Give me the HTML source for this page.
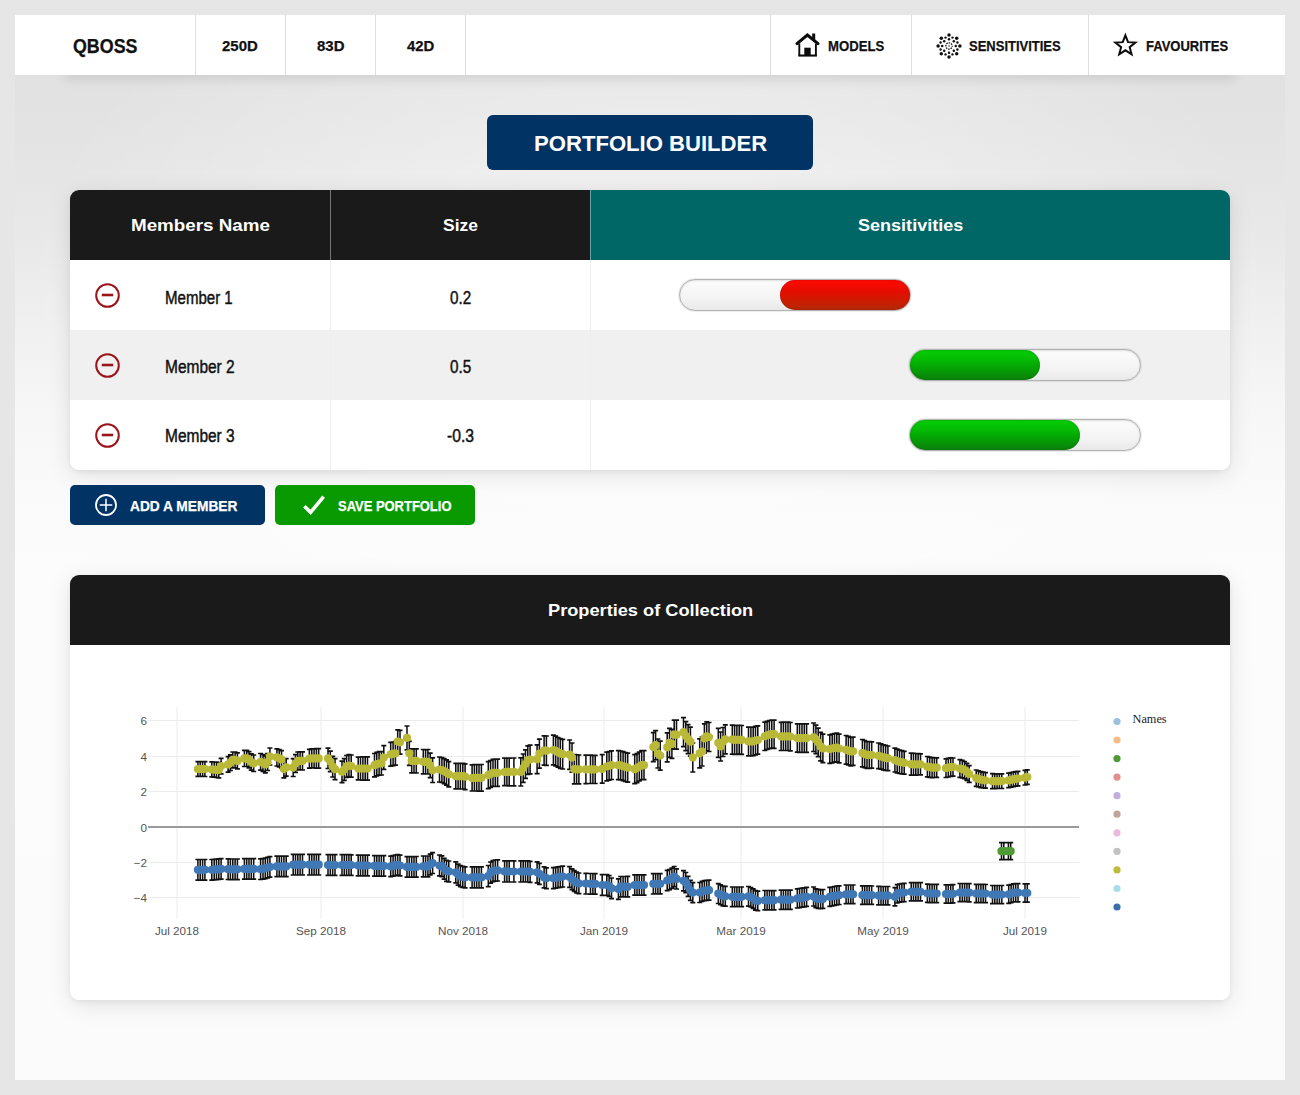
<!DOCTYPE html>
<html lang="en">
<head>
<meta charset="utf-8">
<title>QBOSS - Portfolio Builder</title>
<style>
*{box-sizing:border-box;margin:0;padding:0}
html,body{width:1300px;height:1095px;overflow:hidden}
body{background:#e6e6e6;font-family:"Liberation Sans",sans-serif;color:#111;position:relative}
.wrap{position:absolute;left:15px;top:15px;width:1270px;height:1065px;overflow:hidden;
 background:
  radial-gradient(ellipse 640px 420px at 50% 300px, rgba(255,255,255,.6), rgba(255,255,255,0) 100%),
  linear-gradient(180deg,#e1e1e1 60px,#e4e4e4 140px,#e9e9e9 230px,#f1f1f1 320px,#f7f7f7 400px,#fafafa 480px,#fcfcfc 560px,#fbfbfb 100%);}
.navsh{position:absolute;left:50px;top:30px;width:1170px;height:30px;box-shadow:0 4px 12px rgba(0,0,0,.10)}
.nav{position:absolute;left:0;top:0;width:1270px;height:60px;background:#fff;
}
.nav .it{position:absolute;top:0;height:60px;border-right:1px solid #dedede;display:flex;align-items:center;justify-content:center;
 font-weight:bold;font-size:14.5px;color:#111;white-space:nowrap}
.nav .it.r{border-right:0;border-left:1px solid #dedede}
.nav .logo{font-size:19px;}
.nav svg{display:block;margin-right:8px}
.title{position:absolute;left:472.3px;top:100px;width:325.4px;height:55px;background:#013365;border-radius:6px;color:#fff;
 display:flex;align-items:center;justify-content:center;}
.tbl{position:absolute;left:55px;top:175px;width:1160px;height:280px;border-radius:9px;overflow:hidden;background:#fff;}
.shadow{position:absolute;border-radius:9px;box-shadow:0 5px 24px rgba(0,0,0,.10),0 2px 5px rgba(0,0,0,.06)}
.th{position:absolute;top:0;height:70px;background:#1a1a1a;color:#fff;display:flex;align-items:center;justify-content:center;
 font-weight:bold;font-size:16.5px}
.th.teal{background:#006666}
.row{position:absolute;left:0;width:1160px;height:70px;background:#fff}
.row.alt{background:#f0f0f0}
.row .c{position:absolute;top:0;height:70px;display:flex;align-items:center;justify-content:center;font-size:17px;color:#111}
.vl{position:absolute;top:70px;width:1px;height:210px;background:#eee}
.btn{position:absolute;top:470px;height:40px;border-radius:5px;color:#fff;font-weight:bold;font-size:14.5px;display:flex;align-items:center;white-space:nowrap}
.card{position:absolute;left:55px;top:560px;width:1160px;height:425px;border-radius:9px;overflow:hidden;background:#fff}
.card .hd{height:70px;background:#1a1a1a;color:#fff;display:flex;align-items:center;justify-content:center;font-weight:bold;font-size:16.5px}
.chart{display:block;position:absolute;left:0;top:70px}
.chart .tk{font-family:"Liberation Sans",sans-serif;font-size:11.7px;fill:#555}
.chart .lg{font-family:"Liberation Serif",serif;font-size:12.3px;fill:#222}
.bar{position:absolute;top:19px;width:232px;height:32px;border-radius:16px;border:1px solid #b2b2b2;
 background:linear-gradient(180deg,#fdfdfd 0%,#f4f4f4 60%,#e9e9e9 100%);box-shadow:inset 0 1px 2px rgba(0,0,0,.12),0 0 1.5px rgba(0,0,0,.35)}
.bar i{position:absolute;top:0;height:30px;border-radius:15px;display:block}
.bar i.red{right:0;width:130px;background:linear-gradient(180deg,#ff0a00 0%,#e80c00 35%,#cc1c00 70%,#b22a08 100%);box-shadow:inset 0 0 2px rgba(120,0,0,.5)}
.bar i.grn{left:0;background:linear-gradient(180deg,#06cf06 0%,#04b804 35%,#059a05 70%,#0b800b 100%);box-shadow:inset 0 0 2px rgba(0,80,0,.5)}
.ov{position:absolute;left:0;top:0;width:1300px;height:1095px}
.ov svg{position:absolute;display:block;overflow:visible}
.t{position:absolute;white-space:nowrap;transform-origin:0 0;font-family:"Liberation Sans",sans-serif}
</style>
</head>
<body>
<div class="wrap">
 <div class="navsh"></div>
 <div class="nav">
  <div class="it" style="left:0;width:181px"></div>
  <div class="it" style="left:181px;width:90px"></div>
  <div class="it" style="left:271px;width:90px"></div>
  <div class="it" style="left:361px;width:90px"></div>
  <div class="it r" style="left:755px;width:141px"></div>
  <div class="it r" style="left:896px;width:177px"></div>
  <div class="it r" style="left:1073px;width:197px"></div>
 </div>
 <div class="title"></div>
 <div class="shadow" style="left:55px;top:175px;width:1160px;height:280px"></div>
 <div class="tbl">
  <div class="th" style="left:0;width:260px"></div>
  <div class="th" style="left:260px;width:260px;border-left:1px solid #767676"></div>
  <div class="th teal" style="left:520px;width:640px;border-left:1px solid #66a3a3"></div>
  <div class="row" style="top:70px"><div class="bar" style="left:609px"><i class="red"></i></div></div>
  <div class="row alt" style="top:140px"><div class="bar" style="left:839px"><i class="grn" style="width:130px"></i></div></div>
  <div class="row" style="top:210px"><div class="bar" style="left:839px"><i class="grn" style="width:170px"></i></div></div>
  <div class="vl" style="left:260px"></div><div class="vl" style="left:520px"></div>
 </div>
 <div class="btn" style="left:55px;width:195px;background:#013365"></div>
 <div class="btn" style="left:260px;width:200px;background:#089a00"></div>
 <div class="shadow" style="left:55px;top:560px;width:1160px;height:425px"></div>
 <div class="card">
  <div class="hd"></div>
  <svg class="chart" width="1160" height="355" viewBox="0 0 1160 355">
<path d="M107 62V274M251 62V274M393 62V274M534 62V274M671 62V274M813 62V274M955 62V274M78 75.5H1009M78 111.5H1009M78 146.5H1009M78 217.5H1009M78 252.5H1009" stroke="#ececec" stroke-width="1" fill="none"/>
<path d="M78 182H1009" stroke="#9a9a9a" stroke-width="2.2" fill="none"/>
<path d="M127.9 214.5V235.1M130.2 214.5V235.1M132.6 214.5V235.1M134.9 214.5V235.1M141.8 214.5V235.1M144.2 214.3V234.9M146.5 214.1V234.7M148.8 213.8V234.4M151.1 213.6V234.2M158.1 213.9V234.5M160.4 214V234.6M162.8 214V234.6M165.1 214V234.6M167.4 214V234.6M174.4 213.6V234.2M176.7 213.6V234.2M179 213.6V234.2M181.3 213.6V234.2M183.7 213.6V234.2M190.6 213.9V234.5M193 213.6V234.2M195.3 213V233.6M197.6 212.3V232.9M199.9 211.6V232.2M206.9 211.1V231.7M209.2 211.1V231.7M211.5 211.1V231.7M213.9 211.1V231.7M216.2 211.1V231.7M223.2 209.4V230M225.5 209.4V230M227.8 209.4V230M230.1 209.4V230M232.5 209.4V230M239.4 209.4V230M241.8 209.4V230M244.1 209.4V230M246.4 209.4V230M248.7 209.4V230M258 209.7V230.3M260.3 209.7V230.3M262.7 209.7V230.3M265 209.7V230.3M272 209.7V230.3M274.3 209.7V230.3M276.6 209.7V230.3M278.9 209.7V230.3M281.2 209.8V230.4M288.2 210.2V230.8M290.5 210.2V230.8M292.9 210.2V230.8M295.2 210.2V230.8M297.5 210.2V230.8M304.5 210.6V231.2M306.8 210.6V231.2M309.1 210.6V231.2M311.4 210.6V231.2M313.8 210.6V231.2M320.7 211.1V231.7M323.1 210.6V231.2M325.4 210V230.6M327.7 209.5V230.1M330 210.2V230.8M337 211.6V232.2M339.3 211.6V232.2M341.7 211.6V232.2M344 211.6V232.2M346.3 211.5V232.2M353.3 211V231.8M355.6 211V231.8M357.9 211V231.8M360.2 209.1V229.9M362.6 207.7V228.5M369.5 210V230.9M371.9 210.8V231.7M374.2 213.3V234.2M376.5 215.4V236.3M378.8 216V236.8M385.8 216.8V237.8M388.1 219.1V240.1M390.4 220.6V241.6M392.8 221.4V242.4M395.1 221.9V242.9M402.1 221.9V242.9M404.4 221.9V242.9M406.7 221.9V242.9M409 221.8V242.9M411.4 221.8V242.9M418.3 220.5V241.6M420.6 217V238.1M423 215.5V236.7M425.3 215V236.1M427.6 214.8V236M434.6 215.8V237M436.9 215.9V237M439.2 215.9V237M443.9 215.9V237M450.8 215.9V237M453.2 215.9V237M455.5 215.9V237M457.8 215.9V237M460.1 216.3V237.4M467.1 216.8V237.8M469.4 218.3V239.3M474.1 221.9V242.8M476.4 222.8V243.7M483.4 222.7V243.6M485.7 222.3V243.2M488 221.9V242.7M490.3 221.5V242.3M492.7 221.1V242M499.6 221.6V242.3M502 223.9V244.7M504.3 225.7V246.4M506.6 227.2V248M508.9 228V248.7M515.9 228.3V249M520.5 228.5V249.1M522.9 228.5V249.1M525.2 228.6V249.2M532.2 229.7V250.3M536.8 229.7V250.3M539.1 230.7V251.3M541.5 233V253.6M548.4 233.8V254.3M550.7 231.5V251.9M553.1 231.5V251.9M555.4 231.5V251.9M557.7 231.4V251.9M564.7 229.8V250.2M567 229.8V250.2M569.3 229.8V250.2M571.7 229.8V250.2M574 229.8V250.2M583.3 228.7V249M585.6 228.7V248.9M587.9 228.7V248.9M590.2 228.7V248.9M597.2 225.4V245.6M599.5 224.5V244.7M601.9 223.2V243.3M604.2 221.5V241.6M606.5 223.8V244M613.5 225.7V245.8M615.8 227.5V247.6M618.1 231.3V251.3M620.4 235.3V255.3M622.8 237.6V257.6M629.7 237.5V257.5M632.1 236.4V256.3M634.4 235.7V255.7M636.7 235.3V255.3M639 235.2V255.2M648.3 238.6V258.5M650.6 239.8V259.6M653 241V260.8M655.3 241.4V261.1M662.3 242V261.7M664.6 242V261.7M666.9 242V261.7M669.2 242V261.7M671.6 242V261.7M678.5 241.5V261.1M680.9 242.5V262M683.2 243.9V263.4M685.5 245.7V265.2M687.8 246.2V265.6M694.8 245.5V264.9M697.1 245.5V264.9M699.4 245.5V264.9M701.8 245.6V264.9M704.1 245.6V264.9M711.1 245.1V264.4M713.4 245.1V264.3M715.7 245.1V264.3M718 245.1V264.3M720.3 245.1V264.3M727.3 243.9V263M729.6 243.5V262.6M732 243.1V262.2M734.3 242.8V261.8M736.6 242.4V261.4M743.6 242V261M745.9 243.8V262.7M748.2 244.4V263.3M750.6 244.8V263.7M752.9 244.5V263.4M759.8 242.4V261.3M762.2 242V260.8M764.5 241.5V260.3M766.8 241.1V259.8M769.1 240.8V259.5M776.1 240V258.7M778.4 240V258.6M780.8 240V258.6M783.1 240V258.6M792.4 240.8V259.4M794.7 240.9V259.4M797 240.9V259.4M799.3 240.9V259.4M801.7 241V259.4M808.6 241.4V259.8M811 241.5V259.8M813.3 241.5V259.8M815.6 241.5V259.8M817.9 241.5V259.8M824.9 242.6V260.9M827.2 239.7V258M829.5 239V257.2M831.9 238.6V256.8M834.2 238.4V256.6M841.2 237.7V255.9M843.5 237.7V255.9M845.8 237.7V255.9M848.1 237.7V255.9M850.5 237.7V255.9M857.4 239.2V257.4M859.7 239.4V257.6M862.1 239.4V257.6M864.4 239.4V257.6M866.7 239.4V257.6M876 239.9V258.1M878.3 239.9V258.1M880.7 239.9V258.1M883 239.7V257.9M889.9 238.5V256.7M892.3 238.5V256.7M894.6 238.5V256.7M896.9 238.5V256.7M899.2 238.6V256.8M906.2 239.4V257.6M908.5 239.4V257.6M910.9 239.4V257.6M913.2 239.4V257.6M915.5 239.5V257.7M922.5 240.5V258.7M924.8 240.5V258.7M927.1 240.5V258.7M929.4 240.5V258.7M931.8 240.5V258.7M938.7 240.2V258.4M941.1 239.5V257.7M943.4 238.8V257M945.7 238.6V256.8M948 238.6V256.8M955 238.9V257.1M957.3 238.9V257.1" fill="none" stroke="#111" stroke-width="1.55"/>
<path d="M125.4 214.5h5M125.4 235.1h5M127.7 214.5h5M127.7 235.1h5M130.1 214.5h5M130.1 235.1h5M132.4 214.5h5M132.4 235.1h5M139.3 214.5h5M139.3 235.1h5M141.7 214.3h5M141.7 234.9h5M144 214.1h5M144 234.7h5M146.3 213.8h5M146.3 234.4h5M148.6 213.6h5M148.6 234.2h5M155.6 213.9h5M155.6 234.5h5M157.9 214h5M157.9 234.6h5M160.3 214h5M160.3 234.6h5M162.6 214h5M162.6 234.6h5M164.9 214h5M164.9 234.6h5M171.9 213.6h5M171.9 234.2h5M174.2 213.6h5M174.2 234.2h5M176.5 213.6h5M176.5 234.2h5M178.8 213.6h5M178.8 234.2h5M181.2 213.6h5M181.2 234.2h5M188.1 213.9h5M188.1 234.5h5M190.5 213.6h5M190.5 234.2h5M192.8 213h5M192.8 233.6h5M195.1 212.3h5M195.1 232.9h5M197.4 211.6h5M197.4 232.2h5M204.4 211.1h5M204.4 231.7h5M206.7 211.1h5M206.7 231.7h5M209 211.1h5M209 231.7h5M211.4 211.1h5M211.4 231.7h5M213.7 211.1h5M213.7 231.7h5M220.7 209.4h5M220.7 230h5M223 209.4h5M223 230h5M225.3 209.4h5M225.3 230h5M227.6 209.4h5M227.6 230h5M230 209.4h5M230 230h5M236.9 209.4h5M236.9 230h5M239.3 209.4h5M239.3 230h5M241.6 209.4h5M241.6 230h5M243.9 209.4h5M243.9 230h5M246.2 209.4h5M246.2 230h5M255.5 209.7h5M255.5 230.3h5M257.8 209.7h5M257.8 230.3h5M260.2 209.7h5M260.2 230.3h5M262.5 209.7h5M262.5 230.3h5M269.5 209.7h5M269.5 230.3h5M271.8 209.7h5M271.8 230.3h5M274.1 209.7h5M274.1 230.3h5M276.4 209.7h5M276.4 230.3h5M278.7 209.8h5M278.7 230.4h5M285.7 210.2h5M285.7 230.8h5M288 210.2h5M288 230.8h5M290.4 210.2h5M290.4 230.8h5M292.7 210.2h5M292.7 230.8h5M295 210.2h5M295 230.8h5M302 210.6h5M302 231.2h5M304.3 210.6h5M304.3 231.2h5M306.6 210.6h5M306.6 231.2h5M308.9 210.6h5M308.9 231.2h5M311.3 210.6h5M311.3 231.2h5M318.2 211.1h5M318.2 231.7h5M320.6 210.6h5M320.6 231.2h5M322.9 210h5M322.9 230.6h5M325.2 209.5h5M325.2 230.1h5M327.5 210.2h5M327.5 230.8h5M334.5 211.6h5M334.5 232.2h5M336.8 211.6h5M336.8 232.2h5M339.2 211.6h5M339.2 232.2h5M341.5 211.6h5M341.5 232.2h5M343.8 211.5h5M343.8 232.2h5M350.8 211h5M350.8 231.8h5M353.1 211h5M353.1 231.8h5M355.4 211h5M355.4 231.8h5M357.7 209.1h5M357.7 229.9h5M360.1 207.7h5M360.1 228.5h5M367 210h5M367 230.9h5M369.4 210.8h5M369.4 231.7h5M371.7 213.3h5M371.7 234.2h5M374 215.4h5M374 236.3h5M376.3 216h5M376.3 236.8h5M383.3 216.8h5M383.3 237.8h5M385.6 219.1h5M385.6 240.1h5M387.9 220.6h5M387.9 241.6h5M390.3 221.4h5M390.3 242.4h5M392.6 221.9h5M392.6 242.9h5M399.6 221.9h5M399.6 242.9h5M401.9 221.9h5M401.9 242.9h5M404.2 221.9h5M404.2 242.9h5M406.5 221.8h5M406.5 242.9h5M408.9 221.8h5M408.9 242.9h5M415.8 220.5h5M415.8 241.6h5M418.1 217h5M418.1 238.1h5M420.5 215.5h5M420.5 236.7h5M422.8 215h5M422.8 236.1h5M425.1 214.8h5M425.1 236h5M432.1 215.8h5M432.1 237h5M434.4 215.9h5M434.4 237h5M436.7 215.9h5M436.7 237h5M441.4 215.9h5M441.4 237h5M448.3 215.9h5M448.3 237h5M450.7 215.9h5M450.7 237h5M453 215.9h5M453 237h5M455.3 215.9h5M455.3 237h5M457.6 216.3h5M457.6 237.4h5M464.6 216.8h5M464.6 237.8h5M466.9 218.3h5M466.9 239.3h5M471.6 221.9h5M471.6 242.8h5M473.9 222.8h5M473.9 243.7h5M480.9 222.7h5M480.9 243.6h5M483.2 222.3h5M483.2 243.2h5M485.5 221.9h5M485.5 242.7h5M487.8 221.5h5M487.8 242.3h5M490.2 221.1h5M490.2 242h5M497.1 221.6h5M497.1 242.3h5M499.5 223.9h5M499.5 244.7h5M501.8 225.7h5M501.8 246.4h5M504.1 227.2h5M504.1 248h5M506.4 228h5M506.4 248.7h5M513.4 228.3h5M513.4 249h5M518 228.5h5M518 249.1h5M520.4 228.5h5M520.4 249.1h5M522.7 228.6h5M522.7 249.2h5M529.7 229.7h5M529.7 250.3h5M534.3 229.7h5M534.3 250.3h5M536.6 230.7h5M536.6 251.3h5M539 233h5M539 253.6h5M545.9 233.8h5M545.9 254.3h5M548.2 231.5h5M548.2 251.9h5M550.6 231.5h5M550.6 251.9h5M552.9 231.5h5M552.9 251.9h5M555.2 231.4h5M555.2 251.9h5M562.2 229.8h5M562.2 250.2h5M564.5 229.8h5M564.5 250.2h5M566.8 229.8h5M566.8 250.2h5M569.2 229.8h5M569.2 250.2h5M571.5 229.8h5M571.5 250.2h5M580.8 228.7h5M580.8 249h5M583.1 228.7h5M583.1 248.9h5M585.4 228.7h5M585.4 248.9h5M587.7 228.7h5M587.7 248.9h5M594.7 225.4h5M594.7 245.6h5M597 224.5h5M597 244.7h5M599.4 223.2h5M599.4 243.3h5M601.7 221.5h5M601.7 241.6h5M604 223.8h5M604 244h5M611 225.7h5M611 245.8h5M613.3 227.5h5M613.3 247.6h5M615.6 231.3h5M615.6 251.3h5M617.9 235.3h5M617.9 255.3h5M620.3 237.6h5M620.3 257.6h5M627.2 237.5h5M627.2 257.5h5M629.6 236.4h5M629.6 256.3h5M631.9 235.7h5M631.9 255.7h5M634.2 235.3h5M634.2 255.3h5M636.5 235.2h5M636.5 255.2h5M645.8 238.6h5M645.8 258.5h5M648.1 239.8h5M648.1 259.6h5M650.5 241h5M650.5 260.8h5M652.8 241.4h5M652.8 261.1h5M659.8 242h5M659.8 261.7h5M662.1 242h5M662.1 261.7h5M664.4 242h5M664.4 261.7h5M666.7 242h5M666.7 261.7h5M669.1 242h5M669.1 261.7h5M676 241.5h5M676 261.1h5M678.4 242.5h5M678.4 262h5M680.7 243.9h5M680.7 263.4h5M683 245.7h5M683 265.2h5M685.3 246.2h5M685.3 265.6h5M692.3 245.5h5M692.3 264.9h5M694.6 245.5h5M694.6 264.9h5M696.9 245.5h5M696.9 264.9h5M699.3 245.6h5M699.3 264.9h5M701.6 245.6h5M701.6 264.9h5M708.6 245.1h5M708.6 264.4h5M710.9 245.1h5M710.9 264.3h5M713.2 245.1h5M713.2 264.3h5M715.5 245.1h5M715.5 264.3h5M717.8 245.1h5M717.8 264.3h5M724.8 243.9h5M724.8 263h5M727.1 243.5h5M727.1 262.6h5M729.5 243.1h5M729.5 262.2h5M731.8 242.8h5M731.8 261.8h5M734.1 242.4h5M734.1 261.4h5M741.1 242h5M741.1 261h5M743.4 243.8h5M743.4 262.7h5M745.7 244.4h5M745.7 263.3h5M748.1 244.8h5M748.1 263.7h5M750.4 244.5h5M750.4 263.4h5M757.3 242.4h5M757.3 261.3h5M759.7 242h5M759.7 260.8h5M762 241.5h5M762 260.3h5M764.3 241.1h5M764.3 259.8h5M766.6 240.8h5M766.6 259.5h5M773.6 240h5M773.6 258.7h5M775.9 240h5M775.9 258.6h5M778.3 240h5M778.3 258.6h5M780.6 240h5M780.6 258.6h5M789.9 240.8h5M789.9 259.4h5M792.2 240.9h5M792.2 259.4h5M794.5 240.9h5M794.5 259.4h5M796.8 240.9h5M796.8 259.4h5M799.2 241h5M799.2 259.4h5M806.1 241.4h5M806.1 259.8h5M808.5 241.5h5M808.5 259.8h5M810.8 241.5h5M810.8 259.8h5M813.1 241.5h5M813.1 259.8h5M815.4 241.5h5M815.4 259.8h5M822.4 242.6h5M822.4 260.9h5M824.7 239.7h5M824.7 258h5M827 239h5M827 257.2h5M829.4 238.6h5M829.4 256.8h5M831.7 238.4h5M831.7 256.6h5M838.7 237.7h5M838.7 255.9h5M841 237.7h5M841 255.9h5M843.3 237.7h5M843.3 255.9h5M845.6 237.7h5M845.6 255.9h5M848 237.7h5M848 255.9h5M854.9 239.2h5M854.9 257.4h5M857.2 239.4h5M857.2 257.6h5M859.6 239.4h5M859.6 257.6h5M861.9 239.4h5M861.9 257.6h5M864.2 239.4h5M864.2 257.6h5M873.5 239.9h5M873.5 258.1h5M875.8 239.9h5M875.8 258.1h5M878.2 239.9h5M878.2 258.1h5M880.5 239.7h5M880.5 257.9h5M887.4 238.5h5M887.4 256.7h5M889.8 238.5h5M889.8 256.7h5M892.1 238.5h5M892.1 256.7h5M894.4 238.5h5M894.4 256.7h5M896.7 238.6h5M896.7 256.8h5M903.7 239.4h5M903.7 257.6h5M906 239.4h5M906 257.6h5M908.4 239.4h5M908.4 257.6h5M910.7 239.4h5M910.7 257.6h5M913 239.5h5M913 257.7h5M920 240.5h5M920 258.7h5M922.3 240.5h5M922.3 258.7h5M924.6 240.5h5M924.6 258.7h5M926.9 240.5h5M926.9 258.7h5M929.3 240.5h5M929.3 258.7h5M936.2 240.2h5M936.2 258.4h5M938.6 239.5h5M938.6 257.7h5M940.9 238.8h5M940.9 257h5M943.2 238.6h5M943.2 256.8h5M945.5 238.6h5M945.5 256.8h5M952.5 238.9h5M952.5 257.1h5M954.8 238.9h5M954.8 257.1h5" fill="none" stroke="#111" stroke-width="1.7"/>
<path d="M127.9 224.8h0M130.2 224.8h0M132.6 224.8h0M134.9 224.8h0M141.8 224.8h0M144.2 224.6h0M146.5 224.4h0M148.8 224.1h0M151.1 223.9h0M158.1 224.2h0M160.4 224.3h0M162.8 224.3h0M165.1 224.3h0M167.4 224.3h0M174.4 223.9h0M176.7 223.9h0M179 223.9h0M181.3 223.9h0M183.7 223.9h0M190.6 224.2h0M193 223.9h0M195.3 223.3h0M197.6 222.6h0M199.9 221.9h0M206.9 221.4h0M209.2 221.4h0M211.5 221.4h0M213.9 221.4h0M216.2 221.4h0M223.2 219.7h0M225.5 219.7h0M227.8 219.7h0M230.1 219.7h0M232.5 219.7h0M239.4 219.7h0M241.8 219.7h0M244.1 219.7h0M246.4 219.7h0M248.7 219.7h0M258 220h0M260.3 220h0M262.7 220h0M265 220h0M272 220h0M274.3 220h0M276.6 220h0M278.9 220h0M281.2 220.1h0M288.2 220.5h0M290.5 220.5h0M292.9 220.5h0M295.2 220.5h0M297.5 220.5h0M304.5 220.9h0M306.8 220.9h0M309.1 220.9h0M311.4 220.9h0M313.8 220.9h0M320.7 221.4h0M323.1 220.9h0M325.4 220.3h0M327.7 219.8h0M330 220.5h0M337 221.9h0M339.3 221.9h0M341.7 221.9h0M344 221.9h0M346.3 221.9h0M353.3 221.4h0M355.6 221.4h0M357.9 221.4h0M360.2 219.5h0M362.6 218.1h0M369.5 220.5h0M371.9 221.2h0M374.2 223.7h0M376.5 225.8h0M378.8 226.4h0M385.8 227.3h0M388.1 229.6h0M390.4 231.1h0M392.8 231.9h0M395.1 232.4h0M402.1 232.4h0M404.4 232.4h0M406.7 232.4h0M409 232.4h0M411.4 232.4h0M418.3 231.1h0M420.6 227.6h0M423 226.1h0M425.3 225.6h0M427.6 225.4h0M434.6 226.4h0M436.9 226.5h0M439.2 226.5h0M443.9 226.5h0M450.8 226.5h0M453.2 226.5h0M455.5 226.5h0M457.8 226.5h0M460.1 226.8h0M467.1 227.3h0M469.4 228.8h0M474.1 232.4h0M476.4 233.2h0M483.4 233.2h0M485.7 232.7h0M488 232.3h0M490.3 231.9h0M492.7 231.5h0M499.6 231.9h0M502 234.3h0M504.3 236h0M506.6 237.6h0M508.9 238.4h0M515.9 238.6h0M520.5 238.8h0M522.9 238.8h0M525.2 238.9h0M532.2 240h0M536.8 240h0M539.1 241h0M541.5 243.3h0M548.4 244.1h0M550.7 241.7h0M553.1 241.7h0M555.4 241.7h0M557.7 241.7h0M564.7 240h0M567 240h0M569.3 240h0M571.7 240h0M574 240h0M583.3 238.8h0M585.6 238.8h0M587.9 238.8h0M590.2 238.8h0M597.2 235.5h0M599.5 234.6h0M601.9 233.3h0M604.2 231.6h0M606.5 233.9h0M613.5 235.8h0M615.8 237.5h0M618.1 241.3h0M620.4 245.3h0M622.8 247.6h0M629.7 247.5h0M632.1 246.4h0M634.4 245.7h0M636.7 245.3h0M639 245.2h0M648.3 248.5h0M650.6 249.7h0M653 250.9h0M655.3 251.3h0M662.3 251.8h0M664.6 251.8h0M666.9 251.8h0M669.2 251.8h0M671.6 251.8h0M678.5 251.3h0M680.9 252.2h0M683.2 253.6h0M685.5 255.5h0M687.8 255.9h0M694.8 255.2h0M697.1 255.2h0M699.4 255.2h0M701.8 255.2h0M704.1 255.2h0M711.1 254.7h0M713.4 254.7h0M715.7 254.7h0M718 254.7h0M720.3 254.7h0M727.3 253.5h0M729.6 253.1h0M732 252.7h0M734.3 252.3h0M736.6 251.9h0M743.6 251.5h0M745.9 253.2h0M748.2 253.9h0M750.6 254.2h0M752.9 253.9h0M759.8 251.8h0M762.2 251.4h0M764.5 250.9h0M766.8 250.5h0M769.1 250.2h0M776.1 249.4h0M778.4 249.3h0M780.8 249.3h0M783.1 249.3h0M792.4 250.1h0M794.7 250.2h0M797 250.2h0M799.3 250.2h0M801.7 250.2h0M808.6 250.6h0M811 250.7h0M813.3 250.7h0M815.6 250.7h0M817.9 250.7h0M824.9 251.8h0M827.2 248.9h0M829.5 248.1h0M831.9 247.7h0M834.2 247.5h0M841.2 246.8h0M843.5 246.8h0M845.8 246.8h0M848.1 246.8h0M850.5 246.8h0M857.4 248.3h0M859.7 248.5h0M862.1 248.5h0M864.4 248.5h0M866.7 248.5h0M876 249h0M878.3 249h0M880.7 249h0M883 248.8h0M889.9 247.6h0M892.3 247.6h0M894.6 247.6h0M896.9 247.6h0M899.2 247.7h0M906.2 248.5h0M908.5 248.5h0M910.9 248.5h0M913.2 248.5h0M915.5 248.6h0M922.5 249.6h0M924.8 249.6h0M927.1 249.6h0M929.4 249.6h0M931.8 249.6h0M938.7 249.3h0M941.1 248.6h0M943.4 247.9h0M945.7 247.7h0M948 247.7h0M955 248h0M957.3 248h0" fill="none" stroke="#3f78b4" stroke-width="8.2" stroke-linecap="round"/>

<path d="M127.9 116.7V131.4M130.2 116.7V131.4M132.6 116.7V131.4M134.9 116.6V131.5M141.8 116.8V131.9M144.2 117V132.2M146.5 117.2V132.5M148.8 117.5V132.8M151.1 113.4V128.8M158.1 111.6V127.2M160.4 109.8V125.5M162.8 107V122.8M165.1 107V122.9M167.4 107.9V123.8M174.4 105.3V121.5M176.7 105.3V121.5M179 106.6V122.9M181.3 108.8V125.2M183.7 110V126.5M190.6 108.5V125.2M193 109.5V126.3M195.3 111V127.9M197.6 108.6V125.5M199.9 103V120M206.9 103.8V121M209.2 104.6V122M211.5 105.7V123M213.9 115.4V132.8M216.2 113.6V131.2M223.2 113.7V131.5M225.5 109.6V127.4M227.8 107V124.9M230.1 106.9V124.9M232.5 106.8V125M239.4 104.3V123.1M241.8 103.9V122.9M244.1 103.8V123M246.4 103.7V123.1M248.7 103.6V123.2M258 103.2V123.5M260.3 106.2V126.7M262.7 111.3V132M265 113.7V134.6M272 116.1V137.6M274.3 113.7V135.3M276.6 110.5V132.3M278.9 109.5V131.5M281.2 110V132.2M288.2 112.1V134.9M290.5 112V135M292.9 111.9V135.1M295.2 111.9V135.2M297.5 111.9V135.2M304.5 108.5V131.9M306.8 107.3V130.8M309.1 106.7V130.2M311.4 106.6V130M313.8 100.7V124.3M320.7 97.4V121.1M323.1 97V120.7M325.4 96.5V120.2M327.7 84.8V108.5M330 85.4V109.2M337 81V104.9M339.3 96.4V120.3M341.7 103.9V127.9M344 103.9V127.9M346.3 103.9V128M353.3 104.5V128.9M355.6 104.6V129M357.9 104.5V129M360.2 108.1V132.7M362.6 112.8V137.5M369.5 112V137M371.9 112.5V137.5M374.2 113.6V138.7M376.5 114.9V140.1M378.8 116.6V141.9M385.8 118.4V143.9M388.1 118.4V143.9M390.4 118.3V144M392.8 118.3V144M395.1 118.8V144.7M402.1 119.9V146M404.4 119.7V146M406.7 119.7V146M409 119.6V146.1M411.4 119.5V146.1M418.3 116.7V143.6M420.6 115.5V142.5M423 114.3V141.3M425.3 114.2V141.3M427.6 114.2V141.4M434.6 113.2V140.7M436.9 113.1V140.7M439.2 113.1V140.8M443.9 113V140.9M450.8 112.8V141M453.2 109V137.3M455.5 104.9V133.3M457.8 100.8V129.3M460.1 100.2V128.8M467.1 99.8V128.7M469.4 94.2V123.2M474.1 90.9V120.1M476.4 91V120.3M483.4 90.2V119.8M485.7 91.1V120.8M488 92.5V122.2M490.3 93.6V123.4M492.7 94.3V124M499.6 95V124.3M502 98V127.2M504.3 109.7V138.8M506.6 109.9V138.9M508.9 110V138.8M515.9 110.1V138.7M520.5 110.2V138.5M522.9 110.3V138.5M525.2 110.3V138.5M532.2 109.7V138.1M536.8 107.2V135.8M539.1 106.5V135.1M541.5 105.8V134.5M548.4 105.7V134.6M550.7 106V134.9M553.1 106.7V135.7M555.4 107.5V136.5M557.7 108.2V137.2M564.7 109.7V138.7M567 108.6V137.6M569.3 107V136M571.7 105.7V134.7M574 105.7V134.7M583.3 87.6V116.6M585.6 85.7V114.7M587.9 94V123M590.2 96.1V125.1M597.2 87.8V116.8M599.5 83.3V112.3M601.9 84.4V113.4M604.2 75.2V104.2M606.5 75.2V104.2M613.5 72.7V101.7M615.8 76.6V105.6M618.1 79.7V108.7M620.4 82.2V111.2M622.8 98V127M629.7 93.8V122.8M632.1 92V121M634.4 78.8V107.8M636.7 76.9V105.9M639 77.5V106.5M648.3 83.3V112.3M650.6 87V116M653 82.5V111.5M655.3 79.9V108.9M662.3 80.1V109.1M664.6 80.3V109.3M666.9 80.3V109.3M669.2 80.3V109.2M671.6 80.5V109.3M678.5 82.1V110.8M680.9 82.1V110.8M683.2 82.1V110.6M685.5 81.3V109.9M687.8 80.8V109.2M694.8 77.2V105.5M697.1 76.3V104.5M699.4 75.5V103.7M701.8 75V103.2M704.1 75.1V103.3M711.1 77.3V105.5M713.4 77.2V105.5M715.7 77.2V105.5M718 77.2V105.5M720.3 77.5V105.8M727.3 78.9V107.2M729.6 78.9V107.3M732 78.9V107.3M734.3 78.9V107.3M736.6 78.9V107.3M743.6 78V106.5M745.9 80.1V108.6M748.2 83.1V111.6M750.6 87.3V115.8M752.9 89.1V117.6M759.8 89.8V118.3M762.2 89.2V117.8M764.5 88.7V117.2M766.8 88.2V116.8M769.1 89.2V117.8M776.1 90.5V119.1M778.4 91.3V119.9M780.8 92.3V120.8M783.1 92.1V120.4M792.4 94.5V121.8M794.7 95.5V122.6M797 96.6V123.4M799.3 96.7V123.3M801.7 96.9V123.2M808.6 98V123.6M811 98.9V124.2M813.3 99.8V124.8M815.6 100.4V125.3M817.9 101V125.6M824.9 103.1V127M827.2 104.2V127.8M829.5 105.2V128.5M831.9 105.7V128.8M834.2 106.3V129.2M841.2 108.1V130.2M843.5 108.4V130.2M845.8 108.5V130.1M848.1 108.6V130M850.5 108.8V129.9M857.4 111.5V131.8M859.7 112.1V132.3M862.1 112.7V132.6M864.4 112.8V132.5M866.7 112.9V132.4M876 113.8V132.5M878.3 113.4V132M880.7 112.9V131.3M883 113V131.2M889.9 114.7V132.3M892.3 115.4V132.8M894.6 116.5V133.7M896.9 118.4V135.4M899.2 120.6V137.4M906.2 125V141.3M908.5 125.8V141.9M910.9 126.7V142.6M913.2 127.2V142.9M915.5 127.7V143.2M922.5 128.7V143.6M924.8 128.8V143.6M927.1 128.9V143.5M929.4 128.9V143.5M931.8 128.9V143.5M938.7 128.1V142.7M941.1 127.6V142.2M943.4 127.1V141.7M945.7 126.6V141.2M948 126.3V140.9M955 125.4V140M957.3 124.8V139.4" fill="none" stroke="#111" stroke-width="1.55"/>
<path d="M125.4 116.7h5M125.4 131.4h5M127.7 116.7h5M127.7 131.4h5M130.1 116.7h5M130.1 131.4h5M132.4 116.6h5M132.4 131.5h5M139.3 116.8h5M139.3 131.9h5M141.7 117h5M141.7 132.2h5M144 117.2h5M144 132.5h5M146.3 117.5h5M146.3 132.8h5M148.6 113.4h5M148.6 128.8h5M155.6 111.6h5M155.6 127.2h5M157.9 109.8h5M157.9 125.5h5M160.3 107h5M160.3 122.8h5M162.6 107h5M162.6 122.9h5M164.9 107.9h5M164.9 123.8h5M171.9 105.3h5M171.9 121.5h5M174.2 105.3h5M174.2 121.5h5M176.5 106.6h5M176.5 122.9h5M178.8 108.8h5M178.8 125.2h5M181.2 110h5M181.2 126.5h5M188.1 108.5h5M188.1 125.2h5M190.5 109.5h5M190.5 126.3h5M192.8 111h5M192.8 127.9h5M195.1 108.6h5M195.1 125.5h5M197.4 103h5M197.4 120h5M204.4 103.8h5M204.4 121h5M206.7 104.6h5M206.7 122h5M209 105.7h5M209 123h5M211.4 115.4h5M211.4 132.8h5M213.7 113.6h5M213.7 131.2h5M220.7 113.7h5M220.7 131.5h5M223 109.6h5M223 127.4h5M225.3 107h5M225.3 124.9h5M227.6 106.9h5M227.6 124.9h5M230 106.8h5M230 125h5M236.9 104.3h5M236.9 123.1h5M239.3 103.9h5M239.3 122.9h5M241.6 103.8h5M241.6 123h5M243.9 103.7h5M243.9 123.1h5M246.2 103.6h5M246.2 123.2h5M255.5 103.2h5M255.5 123.5h5M257.8 106.2h5M257.8 126.7h5M260.2 111.3h5M260.2 132h5M262.5 113.7h5M262.5 134.6h5M269.5 116.1h5M269.5 137.6h5M271.8 113.7h5M271.8 135.3h5M274.1 110.5h5M274.1 132.3h5M276.4 109.5h5M276.4 131.5h5M278.7 110h5M278.7 132.2h5M285.7 112.1h5M285.7 134.9h5M288 112h5M288 135h5M290.4 111.9h5M290.4 135.1h5M292.7 111.9h5M292.7 135.2h5M295 111.9h5M295 135.2h5M302 108.5h5M302 131.9h5M304.3 107.3h5M304.3 130.8h5M306.6 106.7h5M306.6 130.2h5M308.9 106.6h5M308.9 130h5M311.3 100.7h5M311.3 124.3h5M318.2 97.4h5M318.2 121.1h5M320.6 97h5M320.6 120.7h5M322.9 96.5h5M322.9 120.2h5M325.2 84.8h5M325.2 108.5h5M327.5 85.4h5M327.5 109.2h5M334.5 81h5M334.5 104.9h5M336.8 96.4h5M336.8 120.3h5M339.2 103.9h5M339.2 127.9h5M341.5 103.9h5M341.5 127.9h5M343.8 103.9h5M343.8 128h5M350.8 104.5h5M350.8 128.9h5M353.1 104.6h5M353.1 129h5M355.4 104.5h5M355.4 129h5M357.7 108.1h5M357.7 132.7h5M360.1 112.8h5M360.1 137.5h5M367 112h5M367 137h5M369.4 112.5h5M369.4 137.5h5M371.7 113.6h5M371.7 138.7h5M374 114.9h5M374 140.1h5M376.3 116.6h5M376.3 141.9h5M383.3 118.4h5M383.3 143.9h5M385.6 118.4h5M385.6 143.9h5M387.9 118.3h5M387.9 144h5M390.3 118.3h5M390.3 144h5M392.6 118.8h5M392.6 144.7h5M399.6 119.9h5M399.6 146h5M401.9 119.7h5M401.9 146h5M404.2 119.7h5M404.2 146h5M406.5 119.6h5M406.5 146.1h5M408.9 119.5h5M408.9 146.1h5M415.8 116.7h5M415.8 143.6h5M418.1 115.5h5M418.1 142.5h5M420.5 114.3h5M420.5 141.3h5M422.8 114.2h5M422.8 141.3h5M425.1 114.2h5M425.1 141.4h5M432.1 113.2h5M432.1 140.7h5M434.4 113.1h5M434.4 140.7h5M436.7 113.1h5M436.7 140.8h5M441.4 113h5M441.4 140.9h5M448.3 112.8h5M448.3 141h5M450.7 109h5M450.7 137.3h5M453 104.9h5M453 133.3h5M455.3 100.8h5M455.3 129.3h5M457.6 100.2h5M457.6 128.8h5M464.6 99.8h5M464.6 128.7h5M466.9 94.2h5M466.9 123.2h5M471.6 90.9h5M471.6 120.1h5M473.9 91h5M473.9 120.3h5M480.9 90.2h5M480.9 119.8h5M483.2 91.1h5M483.2 120.8h5M485.5 92.5h5M485.5 122.2h5M487.8 93.6h5M487.8 123.4h5M490.2 94.3h5M490.2 124h5M497.1 95h5M497.1 124.3h5M499.5 98h5M499.5 127.2h5M501.8 109.7h5M501.8 138.8h5M504.1 109.9h5M504.1 138.9h5M506.4 110h5M506.4 138.8h5M513.4 110.1h5M513.4 138.7h5M518 110.2h5M518 138.5h5M520.4 110.3h5M520.4 138.5h5M522.7 110.3h5M522.7 138.5h5M529.7 109.7h5M529.7 138.1h5M534.3 107.2h5M534.3 135.8h5M536.6 106.5h5M536.6 135.1h5M539 105.8h5M539 134.5h5M545.9 105.7h5M545.9 134.6h5M548.2 106h5M548.2 134.9h5M550.6 106.7h5M550.6 135.7h5M552.9 107.5h5M552.9 136.5h5M555.2 108.2h5M555.2 137.2h5M562.2 109.7h5M562.2 138.7h5M564.5 108.6h5M564.5 137.6h5M566.8 107h5M566.8 136h5M569.2 105.7h5M569.2 134.7h5M571.5 105.7h5M571.5 134.7h5M580.8 87.6h5M580.8 116.6h5M583.1 85.7h5M583.1 114.7h5M585.4 94h5M585.4 123h5M587.7 96.1h5M587.7 125.1h5M594.7 87.8h5M594.7 116.8h5M597 83.3h5M597 112.3h5M599.4 84.4h5M599.4 113.4h5M601.7 75.2h5M601.7 104.2h5M604 75.2h5M604 104.2h5M611 72.7h5M611 101.7h5M613.3 76.6h5M613.3 105.6h5M615.6 79.7h5M615.6 108.7h5M617.9 82.2h5M617.9 111.2h5M620.3 98h5M620.3 127h5M627.2 93.8h5M627.2 122.8h5M629.6 92h5M629.6 121h5M631.9 78.8h5M631.9 107.8h5M634.2 76.9h5M634.2 105.9h5M636.5 77.5h5M636.5 106.5h5M645.8 83.3h5M645.8 112.3h5M648.1 87h5M648.1 116h5M650.5 82.5h5M650.5 111.5h5M652.8 79.9h5M652.8 108.9h5M659.8 80.1h5M659.8 109.1h5M662.1 80.3h5M662.1 109.3h5M664.4 80.3h5M664.4 109.3h5M666.7 80.3h5M666.7 109.2h5M669.1 80.5h5M669.1 109.3h5M676 82.1h5M676 110.8h5M678.4 82.1h5M678.4 110.8h5M680.7 82.1h5M680.7 110.6h5M683 81.3h5M683 109.9h5M685.3 80.8h5M685.3 109.2h5M692.3 77.2h5M692.3 105.5h5M694.6 76.3h5M694.6 104.5h5M696.9 75.5h5M696.9 103.7h5M699.3 75h5M699.3 103.2h5M701.6 75.1h5M701.6 103.3h5M708.6 77.3h5M708.6 105.5h5M710.9 77.2h5M710.9 105.5h5M713.2 77.2h5M713.2 105.5h5M715.5 77.2h5M715.5 105.5h5M717.8 77.5h5M717.8 105.8h5M724.8 78.9h5M724.8 107.2h5M727.1 78.9h5M727.1 107.3h5M729.5 78.9h5M729.5 107.3h5M731.8 78.9h5M731.8 107.3h5M734.1 78.9h5M734.1 107.3h5M741.1 78h5M741.1 106.5h5M743.4 80.1h5M743.4 108.6h5M745.7 83.1h5M745.7 111.6h5M748.1 87.3h5M748.1 115.8h5M750.4 89.1h5M750.4 117.6h5M757.3 89.8h5M757.3 118.3h5M759.7 89.2h5M759.7 117.8h5M762 88.7h5M762 117.2h5M764.3 88.2h5M764.3 116.8h5M766.6 89.2h5M766.6 117.8h5M773.6 90.5h5M773.6 119.1h5M775.9 91.3h5M775.9 119.9h5M778.3 92.3h5M778.3 120.8h5M780.6 92.1h5M780.6 120.4h5M789.9 94.5h5M789.9 121.8h5M792.2 95.5h5M792.2 122.6h5M794.5 96.6h5M794.5 123.4h5M796.8 96.7h5M796.8 123.3h5M799.2 96.9h5M799.2 123.2h5M806.1 98h5M806.1 123.6h5M808.5 98.9h5M808.5 124.2h5M810.8 99.8h5M810.8 124.8h5M813.1 100.4h5M813.1 125.3h5M815.4 101h5M815.4 125.6h5M822.4 103.1h5M822.4 127h5M824.7 104.2h5M824.7 127.8h5M827 105.2h5M827 128.5h5M829.4 105.7h5M829.4 128.8h5M831.7 106.3h5M831.7 129.2h5M838.7 108.1h5M838.7 130.2h5M841 108.4h5M841 130.2h5M843.3 108.5h5M843.3 130.1h5M845.6 108.6h5M845.6 130h5M848 108.8h5M848 129.9h5M854.9 111.5h5M854.9 131.8h5M857.2 112.1h5M857.2 132.3h5M859.6 112.7h5M859.6 132.6h5M861.9 112.8h5M861.9 132.5h5M864.2 112.9h5M864.2 132.4h5M873.5 113.8h5M873.5 132.5h5M875.8 113.4h5M875.8 132h5M878.2 112.9h5M878.2 131.3h5M880.5 113h5M880.5 131.2h5M887.4 114.7h5M887.4 132.3h5M889.8 115.4h5M889.8 132.8h5M892.1 116.5h5M892.1 133.7h5M894.4 118.4h5M894.4 135.4h5M896.7 120.6h5M896.7 137.4h5M903.7 125h5M903.7 141.3h5M906 125.8h5M906 141.9h5M908.4 126.7h5M908.4 142.6h5M910.7 127.2h5M910.7 142.9h5M913 127.7h5M913 143.2h5M920 128.7h5M920 143.6h5M922.3 128.8h5M922.3 143.6h5M924.6 128.9h5M924.6 143.5h5M926.9 128.9h5M926.9 143.5h5M929.3 128.9h5M929.3 143.5h5M936.2 128.1h5M936.2 142.7h5M938.6 127.6h5M938.6 142.2h5M940.9 127.1h5M940.9 141.7h5M943.2 126.6h5M943.2 141.2h5M945.5 126.3h5M945.5 140.9h5M952.5 125.4h5M952.5 140h5M954.8 124.8h5M954.8 139.4h5" fill="none" stroke="#111" stroke-width="1.7"/>
<path d="M127.9 124h0M130.2 124h0M132.6 124h0M134.9 124h0M141.8 124.4h0M144.2 124.6h0M146.5 124.9h0M148.8 125.1h0M151.1 121.1h0M158.1 119.4h0M160.4 117.7h0M162.8 114.9h0M165.1 114.9h0M167.4 115.9h0M174.4 113.4h0M176.7 113.4h0M179 114.7h0M181.3 117h0M183.7 118.3h0M190.6 116.9h0M193 117.9h0M195.3 119.5h0M197.6 117h0M199.9 111.5h0M206.9 112.4h0M209.2 113.3h0M211.5 114.4h0M213.9 124.1h0M216.2 122.4h0M223.2 122.6h0M225.5 118.5h0M227.8 115.9h0M230.1 115.9h0M232.5 115.9h0M239.4 113.7h0M241.8 113.4h0M244.1 113.4h0M246.4 113.4h0M248.7 113.4h0M258 113.4h0M260.3 116.5h0M262.7 121.6h0M265 124.2h0M272 126.8h0M274.3 124.5h0M276.6 121.4h0M278.9 120.5h0M281.2 121.1h0M288.2 123.5h0M290.5 123.5h0M292.9 123.5h0M295.2 123.5h0M297.5 123.5h0M304.5 120.2h0M306.8 119.1h0M309.1 118.5h0M311.4 118.3h0M313.8 112.5h0M320.7 109.3h0M323.1 108.8h0M325.4 108.4h0M327.7 96.6h0M330 97.3h0M337 92.9h0M339.3 108.3h0M341.7 115.9h0M344 115.9h0M346.3 115.9h0M353.3 116.7h0M355.6 116.8h0M357.9 116.8h0M360.2 120.4h0M362.6 125.2h0M369.5 124.5h0M371.9 125h0M374.2 126.2h0M376.5 127.5h0M378.8 129.3h0M385.8 131.1h0M388.1 131.2h0M390.4 131.2h0M392.8 131.2h0M395.1 131.7h0M402.1 133h0M404.4 132.8h0M406.7 132.8h0M409 132.8h0M411.4 132.8h0M418.3 130.1h0M420.6 129h0M423 127.8h0M425.3 127.8h0M427.6 127.8h0M434.6 127h0M436.9 126.9h0M439.2 126.9h0M443.9 126.9h0M450.8 126.9h0M453.2 123.1h0M455.5 119.1h0M457.8 115.1h0M460.1 114.5h0M467.1 114.2h0M469.4 108.7h0M474.1 105.5h0M476.4 105.7h0M483.4 105h0M485.7 105.9h0M488 107.3h0M490.3 108.5h0M492.7 109.2h0M499.6 109.7h0M502 112.6h0M504.3 124.2h0M506.6 124.4h0M508.9 124.4h0M515.9 124.4h0M520.5 124.4h0M522.9 124.4h0M525.2 124.4h0M532.2 123.9h0M536.8 121.5h0M539.1 120.8h0M541.5 120.2h0M548.4 120.2h0M550.7 120.4h0M553.1 121.2h0M555.4 122h0M557.7 122.7h0M564.7 124.2h0M567 123.1h0M569.3 121.5h0M571.7 120.2h0M574 120.2h0M583.3 102.1h0M585.6 100.2h0M587.9 108.5h0M590.2 110.6h0M597.2 102.3h0M599.5 97.8h0M601.9 98.9h0M604.2 89.7h0M606.5 89.7h0M613.5 87.2h0M615.8 91.1h0M618.1 94.2h0M620.4 96.7h0M622.8 112.5h0M629.7 108.3h0M632.1 106.5h0M634.4 93.3h0M636.7 91.4h0M639 92h0M648.3 97.8h0M650.6 101.5h0M653 97h0M655.3 94.4h0M662.3 94.6h0M664.6 94.8h0M666.9 94.8h0M669.2 94.8h0M671.6 94.9h0M678.5 96.4h0M680.9 96.5h0M683.2 96.4h0M685.5 95.6h0M687.8 95h0M694.8 91.3h0M697.1 90.4h0M699.4 89.6h0M701.8 89.1h0M704.1 89.2h0M711.1 91.4h0M713.4 91.4h0M715.7 91.4h0M718 91.4h0M720.3 91.6h0M727.3 93.1h0M729.6 93.1h0M732 93.1h0M734.3 93.1h0M736.6 93.1h0M743.6 92.3h0M745.9 94.4h0M748.2 97.3h0M750.6 101.6h0M752.9 103.4h0M759.8 104.1h0M762.2 103.5h0M764.5 103h0M766.8 102.5h0M769.1 103.5h0M776.1 104.8h0M778.4 105.6h0M780.8 106.5h0M783.1 106.3h0M792.4 108.1h0M794.7 109h0M797 110h0M799.3 110h0M801.7 110h0M808.6 110.8h0M811 111.5h0M813.3 112.3h0M815.6 112.9h0M817.9 113.3h0M824.9 115.1h0M827.2 116h0M829.5 116.8h0M831.9 117.3h0M834.2 117.8h0M841.2 119.2h0M843.5 119.3h0M845.8 119.3h0M848.1 119.3h0M850.5 119.3h0M857.4 121.7h0M859.7 122.2h0M862.1 122.7h0M864.4 122.7h0M866.7 122.7h0M876 123.2h0M878.3 122.7h0M880.7 122.1h0M883 122.1h0M889.9 123.5h0M892.3 124.1h0M894.6 125.1h0M896.9 126.9h0M899.2 129h0M906.2 133.1h0M908.5 133.9h0M910.9 134.6h0M913.2 135.1h0M915.5 135.5h0M922.5 136.2h0M924.8 136.2h0M927.1 136.2h0M929.4 136.2h0M931.8 136.2h0M938.7 135.4h0M941.1 134.9h0M943.4 134.4h0M945.7 133.9h0M948 133.6h0M955 132.7h0M957.3 132.1h0" fill="none" stroke="#b9b837" stroke-width="8.2" stroke-linecap="round"/>

<path d="M931.5 197.7V214.7M933.8 197.7V214.7M938.4 197.7V214.7M940.7 197.7V214.7" fill="none" stroke="#111" stroke-width="1.55"/>
<path d="M929 197.7h5M929 214.7h5M931.3 197.7h5M931.3 214.7h5M935.9 197.7h5M935.9 214.7h5M938.2 197.7h5M938.2 214.7h5" fill="none" stroke="#111" stroke-width="1.7"/>
<path d="M931.5 206.2h0M933.8 206.2h0M938.4 206.2h0M940.7 206.2h0" fill="none" stroke="#4f9a35" stroke-width="8.2" stroke-linecap="round"/>

<g class="tk" text-anchor="end">
<text x="77" y="79.5">6</text>
<text x="77" y="115.5">4</text>
<text x="77" y="150.5">2</text>
<text x="77" y="186.5">0</text>
<text x="77" y="221.5">−2</text>
<text x="77" y="256.5">−4</text>
</g><g class="tk" text-anchor="middle">
<text x="107" y="290">Jul 2018</text>
<text x="251" y="290">Sep 2018</text>
<text x="393" y="290">Nov 2018</text>
<text x="534" y="290">Jan 2019</text>
<text x="671" y="290">Mar 2019</text>
<text x="813" y="290">May 2019</text>
<text x="955" y="290">Jul 2019</text>
</g>
<circle cx="1047" cy="76.5" r="3.6" fill="#9dbfe0"/>
<circle cx="1047" cy="95" r="3.6" fill="#f5bd85"/>
<circle cx="1047" cy="113.6" r="3.6" fill="#4f9a35"/>
<circle cx="1047" cy="132.1" r="3.6" fill="#e08f8c"/>
<circle cx="1047" cy="150.7" r="3.6" fill="#c3addb"/>
<circle cx="1047" cy="169.2" r="3.6" fill="#bfa49c"/>
<circle cx="1047" cy="187.8" r="3.6" fill="#ebb8de"/>
<circle cx="1047" cy="206.4" r="3.6" fill="#c2c2c2"/>
<circle cx="1047" cy="224.9" r="3.6" fill="#bcbb3a"/>
<circle cx="1047" cy="243.5" r="3.6" fill="#a6dde6"/>
<circle cx="1047" cy="262" r="3.6" fill="#3a6fae"/>
<text class="lg" x="1062.5" y="78">Names</text>
</svg>
 </div>
</div>
<div class="ov">
<svg style="left:794px;top:32px" width="27" height="26" viewBox="794 32 27 26"><path d="M797 43.6 807.4 35 818 43.6" fill="none" stroke="#0c0c0c" stroke-width="3.1" stroke-linecap="round" stroke-linejoin="miter"/><path d="M812.2 33.6h3v7l-3-2.6z" fill="#0c0c0c"/><path d="M799.3 43.5V55.6M815.9 43.5V55.6" fill="none" stroke="#0c0c0c" stroke-width="1.9"/><path d="M798.3 55.55H816.9" stroke="#0c0c0c" stroke-width="2.1"/><rect x="804.3" y="47.7" width="6.4" height="7.6" fill="#0c0c0c"/></svg>
<svg style="left:935.9px;top:32.5px" width="26" height="26" viewBox="-13 -13 26 26"><g fill="#111"><circle cx="0.00" cy="-10.90" r="1.75"/><circle cx="7.71" cy="-7.71" r="1.75"/><circle cx="10.90" cy="-0.00" r="1.75"/><circle cx="7.71" cy="7.71" r="1.75"/><circle cx="0.00" cy="10.90" r="1.75"/><circle cx="-7.71" cy="7.71" r="1.75"/><circle cx="-10.90" cy="0.00" r="1.75"/><circle cx="-7.71" cy="-7.71" r="1.75"/><circle cx="3.48" cy="-8.41" r="1.20"/><circle cx="8.41" cy="-3.48" r="1.20"/><circle cx="8.41" cy="3.48" r="1.20"/><circle cx="3.48" cy="8.41" r="1.20"/><circle cx="-3.48" cy="8.41" r="1.20"/><circle cx="-8.41" cy="3.48" r="1.20"/><circle cx="-8.41" cy="-3.48" r="1.20"/><circle cx="-3.48" cy="-8.41" r="1.20"/><circle cx="0.00" cy="-6.80" r="1.25"/><circle cx="4.81" cy="-4.81" r="1.25"/><circle cx="6.80" cy="-0.00" r="1.25"/><circle cx="4.81" cy="4.81" r="1.25"/><circle cx="0.00" cy="6.80" r="1.25"/><circle cx="-4.81" cy="4.81" r="1.25"/><circle cx="-6.80" cy="0.00" r="1.25"/><circle cx="-4.81" cy="-4.81" r="1.25"/></g><circle r="3.2" fill="none" stroke="#111" stroke-width="1.25" stroke-dasharray="1.6 0.913" stroke-dashoffset="0.8"/><path d="M0 -1.1V0.9" stroke="#111" stroke-width=".8"/></svg>
<svg style="left:1112px;top:32px" width="27" height="26" viewBox="1112 32 27 26"><path d="M1125.40 35.30L1128.05 42.16L1135.39 42.56L1129.68 47.19L1131.57 54.29L1125.40 50.30L1119.23 54.29L1121.12 47.19L1115.41 42.56L1122.75 42.16Z" fill="none" stroke="#0c0c0c" stroke-width="2" stroke-linejoin="miter" stroke-miterlimit="6"/></svg>
<svg style="left:93px;top:281px" width="29" height="29" viewBox="-14.5 -14.5 29 29"><circle r="11.3" fill="none" stroke="#9a141a" stroke-width="2"/><path d="M-5.7 -.5h11.4" stroke="#9a141a" stroke-width="2.6"/></svg>
<svg style="left:93px;top:351px" width="29" height="29" viewBox="-14.5 -14.5 29 29"><circle r="11.3" fill="none" stroke="#9a141a" stroke-width="2"/><path d="M-5.7 -.5h11.4" stroke="#9a141a" stroke-width="2.6"/></svg>
<svg style="left:93px;top:421px" width="29" height="29" viewBox="-14.5 -14.5 29 29"><circle r="11.3" fill="none" stroke="#9a141a" stroke-width="2"/><path d="M-5.7 -.5h11.4" stroke="#9a141a" stroke-width="2.6"/></svg>
<svg style="left:94px;top:493px" width="24" height="24" viewBox="-12 -12 24 24"><circle r="10" fill="none" stroke="#fff" stroke-width="1.8"/><path d="M0 -6.3v12.6M-6.3 0h12.6" stroke="#fff" stroke-width="1.5" fill="none"/></svg>
<svg style="left:300px;top:492px" width="28" height="26" viewBox="300 492 28 26"><path d="M304.4 506.2 310.6 512.4 323.6 496.6" fill="none" stroke="#fff" stroke-width="3.6"/></svg>
<span class="t" style="left:73.1px;top:37.0px;font-size:19.7px;line-height:19.7px;color:#111;transform:scaleX(0.906);font-weight:bold;-webkit-text-stroke:.25px #111">QBOSS</span>
<span class="t" style="left:222.3px;top:37.7px;font-size:15.3px;line-height:15.3px;color:#111;transform:scaleX(0.978);font-weight:bold;-webkit-text-stroke:.25px #111">250D</span>
<span class="t" style="left:316.9px;top:37.7px;font-size:15.3px;line-height:15.3px;color:#111;transform:scaleX(0.979);font-weight:bold;-webkit-text-stroke:.25px #111">83D</span>
<span class="t" style="left:406.5px;top:37.7px;font-size:15.3px;line-height:15.3px;color:#111;transform:scaleX(0.975);font-weight:bold;-webkit-text-stroke:.25px #111">42D</span>
<span class="t" style="left:827.6px;top:39.4px;font-size:14.4px;line-height:14.4px;color:#111;transform:scaleX(0.913);font-weight:bold;-webkit-text-stroke:.25px #111">MODELS</span>
<span class="t" style="left:968.8px;top:39.4px;font-size:14.4px;line-height:14.4px;color:#111;transform:scaleX(0.903);font-weight:bold;-webkit-text-stroke:.25px #111">SENSITIVITIES</span>
<span class="t" style="left:1145.8px;top:39.4px;font-size:14.4px;line-height:14.4px;color:#111;transform:scaleX(0.904);font-weight:bold;-webkit-text-stroke:.25px #111">FAVOURITES</span>
<span class="t" style="left:533.9px;top:132.5px;font-size:22.2px;line-height:22.2px;color:#fff;transform:scaleX(0.996);font-weight:bold">PORTFOLIO BUILDER</span>
<span class="t" style="left:130.8px;top:217.4px;font-size:17.0px;line-height:17.0px;color:#fff;transform:scaleX(1.106);font-weight:bold">Members Name</span>
<span class="t" style="left:442.9px;top:217.4px;font-size:17.0px;line-height:17.0px;color:#fff;transform:scaleX(1.026);font-weight:bold">Size</span>
<span class="t" style="left:858.0px;top:217.4px;font-size:17.0px;line-height:17.0px;color:#fff;transform:scaleX(1.061);font-weight:bold">Sensitivities</span>
<span class="t" style="left:165.4px;top:288.6px;font-size:18px;line-height:18px;color:#111;transform:scaleX(0.836);-webkit-text-stroke:.45px #111">Member 1</span>
<span class="t" style="left:165.3px;top:357.5px;font-size:18px;line-height:18px;color:#111;transform:scaleX(0.860);-webkit-text-stroke:.45px #111">Member 2</span>
<span class="t" style="left:165.3px;top:426.6px;font-size:18px;line-height:18px;color:#111;transform:scaleX(0.860);-webkit-text-stroke:.45px #111">Member 3</span>
<span class="t" style="left:449.9px;top:288.6px;font-size:18px;line-height:18px;color:#111;transform:scaleX(0.848);-webkit-text-stroke:.45px #111">0.2</span>
<span class="t" style="left:449.9px;top:357.5px;font-size:18px;line-height:18px;color:#111;transform:scaleX(0.848);-webkit-text-stroke:.45px #111">0.5</span>
<span class="t" style="left:447.2px;top:426.6px;font-size:18px;line-height:18px;color:#111;transform:scaleX(0.871);-webkit-text-stroke:.45px #111">-0.3</span>
<span class="t" style="left:130.2px;top:498.7px;font-size:14.4px;line-height:14.4px;color:#fff;transform:scaleX(0.955);font-weight:bold;-webkit-text-stroke:.25px #fff">ADD A MEMBER</span>
<span class="t" style="left:337.8px;top:498.7px;font-size:14.4px;line-height:14.4px;color:#fff;transform:scaleX(0.900);font-weight:bold;-webkit-text-stroke:.25px #fff">SAVE PORTFOLIO</span>
<span class="t" style="left:548.1px;top:602.2px;font-size:17.0px;line-height:17.0px;color:#fff;transform:scaleX(1.070);font-weight:bold">Properties of Collection</span>
</div>
</body>
</html>
